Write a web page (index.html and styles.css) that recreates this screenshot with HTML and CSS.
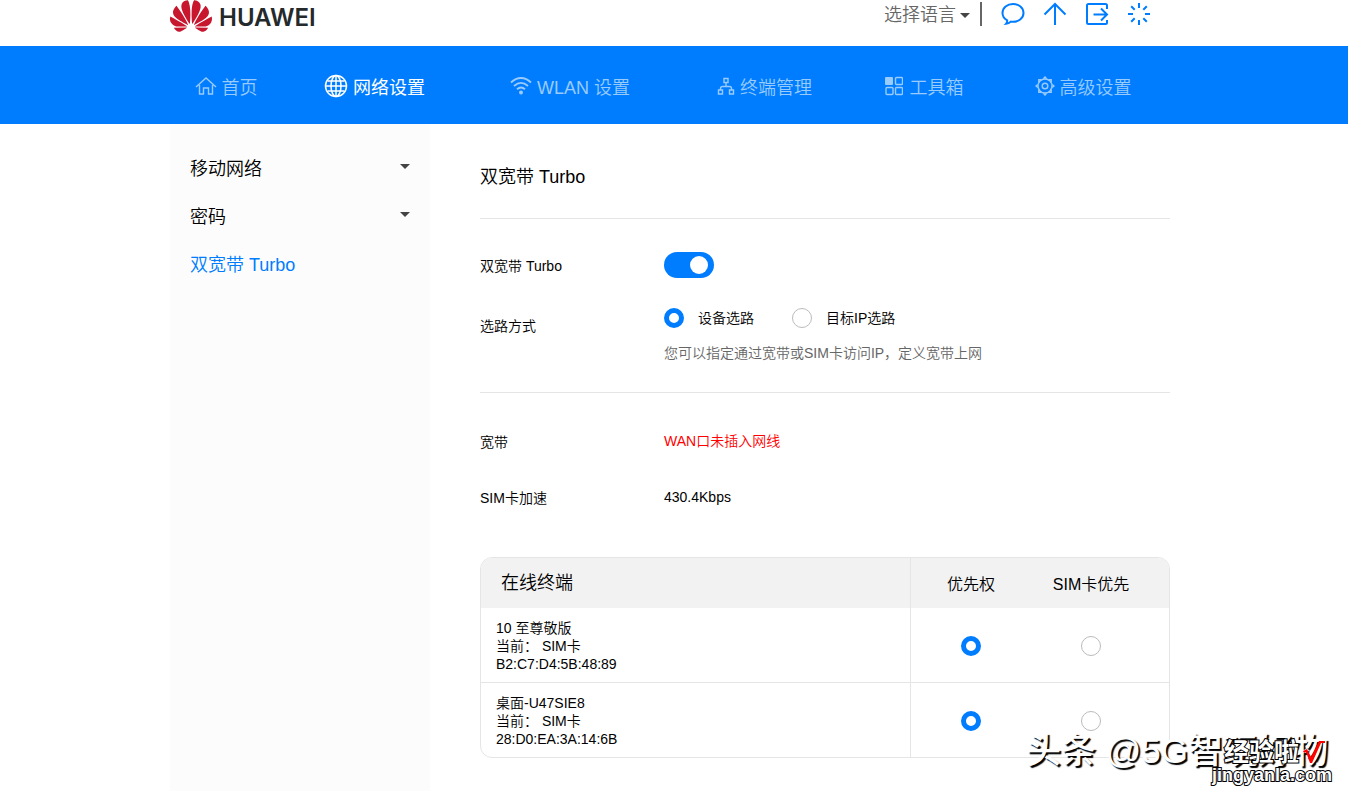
FILE: index.html
```html
<!DOCTYPE html>
<html lang="zh-CN">
<head>
<meta charset="utf-8">
<meta name="viewport" content="width=device-width, initial-scale=1">
<title>双宽带 Turbo</title>
<link rel="stylesheet" href="styles.css">
</head>
<body>
<header class="topbar">
  <div class="wrap topbar-inner">
    <a class="brand" href="#">
      <svg class="brand-mark" viewBox="0 2.9 24 18.2" aria-hidden="true"><path d="M3.67 6.14S1.82 7.91 1.72 9.78v.35c.08 1.51 1.22 2.4 1.22 2.4 1.83 1.79 6.26 4.04 7.3 4.55 0 0 .06.03.1-.01l.02-.04v-.04C7.52 10.8 3.67 6.14 3.67 6.14zM9.65 18.6c-.02-.08-.1-.08-.1-.08l-7.38.26c.8 1.43 2.15 2.53 3.56 2.2.96-.25 3.16-1.78 3.88-2.3.06-.05.04-.09.04-.09zm.08-.78C6.49 15.63.21 12.28.21 12.28c-.15.46-.2.9-.21 1.3v.07c0 1.07.4 1.82.4 1.82.8 1.69 2.34 2.2 2.34 2.2.7.3 1.4.31 1.4.31.12.02 4.4 0 5.54 0 .05 0 .08-.05.08-.05v-.06c0-.03-.03-.05-.03-.05zM9.06 3.19a3.42 3.42 0 00-2.57 3.15v.41c.03.6.16 1.05.16 1.05.66 2.9 3.86 7.65 4.55 8.65.05.05.1.03.1.03a.1.1 0 00.06-.1c1.06-10.6-1.11-13.42-1.11-13.42-.32.02-1.19.23-1.19.23zm8.299 2.27s-.49-1.8-2.44-2.28c0 0-.57-.14-1.17-.22 0 0-2.18 2.81-1.12 13.43.01.07.06.08.06.08.07.03.1-.03.1-.03.72-1.03 3.9-5.76 4.55-8.64 0 0 .36-1.4.02-2.34zm-2.92 13.07s-.07 0-.09.05c0 0-.01.07.03.1.7.51 2.85 2 3.88 2.3 0 0 .16.05.43.06h.14c.69-.02 1.9-.37 3-2.26l-7.4-.25zm7.83-8.41c.14-2.06-1.94-3.97-1.94-3.98 0 0-3.85 4.66-6.67 10.8 0 0-.03.08.02.13l.04.01h.06c1.06-.53 5.46-2.77 7.28-4.54 0 0 1.15-.93 1.21-2.42zm1.52 2.14s-6.28 3.37-9.52 5.55c0 0-.05.04-.03.11 0 0 .03.06.07.06 1.16 0 5.56 0 5.67-.02 0 0 .57-.02 1.27-.29 0 0 1.56-.5 2.37-2.27 0 0 .73-1.45.17-3.14z"/></svg>
      <span class="brand-name">HUAWEI</span>
    </a>
    <div class="tools">
      <button class="lang" type="button">选择语言<span class="caret"></span></button>
      <span class="divider"></span>
      <button class="tool" type="button" aria-label="消息"><svg viewBox="0 0 24 24"><path d="M6.200 18.300C3.300 16.700 1.500 14 1.500 11 1.500 5.900 6.200 2 12 2s10.500 3.900 10.500 9-4.700 8.800-10.500 8.800c-.8 0-1.500 0-2.200-.2-1.300 1.300-2.900 2-4.800 2.200.9-1 1.300-2.200 1.200-3.500z"/></svg></button>
      <button class="tool" type="button" aria-label="更新"><svg viewBox="0 0 24 24"><path d="M12 23V2M1.500 12.500 12 2l10.500 10.500"/></svg></button>
      <button class="tool" type="button" aria-label="退出"><svg viewBox="0 0 24 24"><path d="M22 7V3.500A1.500 1.500 0 0 0 20.500 2h-17A1.500 1.500 0 0 0 2 3.500v17A1.500 1.500 0 0 0 3.500 22h17a1.500 1.500 0 0 0 1.500-1.500V18M8.500 12.500H22M16 6.500l6 6-6 6"/></svg></button>
      <button class="tool" type="button" aria-label="刷新"><svg viewBox="0 0 24 24"><path d="M12 1v5M12 18v5M1 12h5M18 12h5M4.200 4.200l3.500 3.500M16.300 16.300l3.500 3.500M4.200 19.800l3.500-3.500M16.300 7.700l3.500-3.500"/></svg></button>
    </div>
  </div>
</header>
<nav class="nav">
  <div class="wrap nav-inner">
    <a class="nav-item" href="#"><svg viewBox="0 0 22 22"><path d="M1 12 11 3l10 9M4.500 10V19h4v-6h5v6h4v-9"/></svg>首页</a>
    <a class="nav-item active" href="#"><svg viewBox="0 0 24 24"><circle cx="12" cy="12" r="10.500"/><ellipse cx="12" cy="12" rx="5" ry="10.500"/><path d="M12 1.500v21M1.500 12h21M3.500 7h17M3.500 17h17"/></svg>网络设置</a>
    <a class="nav-item" href="#"><svg class="bold" viewBox="0 0 22 22"><path d="M1 7.500c6-6 14-6 20 0M4 11c4.500-4 9.500-4 14 0M7 14.200c2.500-2.200 5.500-2.200 8 0"/><circle class="solid" cx="11" cy="17.500" r="2"/></svg>WLAN 设置</a>
    <a class="nav-item narrow" href="#"><svg viewBox="0 0 18 20"><path d="M7 2.500h4v4H7zM1.500 14h4v4h-4zM12.500 14h4v4h-4zM9 6.500v4M3.500 14v-1.500a2 2 0 0 1 2-2h7a2 2 0 0 1 2 2V14"/></svg>终端管理</a>
    <a class="nav-item spaced" href="#"><svg viewBox="0 0 18 20"><rect class="solid" x="0" y="1" width="8" height="8" rx="1"/><rect x="10.500" y="1.500" width="7" height="7" rx="1"/><rect x="1" y="11.500" width="7" height="7" rx="1"/><rect x="10.500" y="11.500" width="7" height="7" rx="1"/></svg>工具箱</a>
    <a class="nav-item gear" href="#"><svg viewBox="0 0 20 20"><circle cx="10" cy="10" r="2.800"/><circle cx="10" cy="10" r="7"/><path d="M8.500 2.800 10 1l1.500 1.800M8.500 17.200 10 19l1.500-1.800M2.800 8.500 1 10l1.800 1.500M17.200 8.500 19 10l-1.800 1.500M3.800 6.200V3.800h2.400M13.800 3.800h2.400v2.400M16.200 13.800v2.400h-2.400M6.200 16.200H3.800v-2.400"/></svg>高级设置</a>
  </div>
</nav>
<div class="wrap layout">
  <aside class="sidebar">
    <a class="side-item" href="#">移动网络<span class="caret"></span></a>
    <a class="side-item" href="#">密码<span class="caret"></span></a>
    <a class="side-item current" href="#">双宽带 Turbo</a>
  </aside>
  <main class="content">
    <h1 class="title">双宽带 Turbo</h1>
    <form class="settings">
      <div class="row">
        <label class="row-label" for="turbo">双宽带 Turbo</label>
        <input class="switch" type="checkbox" id="turbo" checked>
      </div>
      <div class="row route-row">
        <span class="row-label" id="route-label">选路方式</span>
        <div class="route" role="radiogroup" aria-labelledby="route-label">
          <div class="options">
            <label class="option"><input class="radio" type="radio" name="route" checked>设备选路</label>
            <label class="option"><input class="radio" type="radio" name="route">目标IP选路</label>
          </div>
          <p class="hint">您可以指定通过宽带或SIM卡访问IP，定义宽带上网</p>
        </div>
      </div>
    </form>
    <section class="status">
      <div class="row"><span class="row-label">宽带</span><span class="alert">WAN口未插入网线</span></div>
      <div class="row"><span class="row-label">SIM卡加速</span><span>430.4Kbps</span></div>
    </section>
    <table class="devices">
      <thead>
        <tr><th class="col-name" scope="col">在线终端</th><th class="col-pri" scope="col">优先权</th><th class="col-sim" scope="col">SIM卡优先</th></tr>
      </thead>
      <tbody>
        <tr>
          <td class="col-name">10 至尊敬版<br>当前： SIM卡<br>B2:C7:D4:5B:48:89</td>
          <td class="col-pri"><input class="radio" type="radio" name="dev1" aria-label="优先权" checked></td>
          <td class="col-sim"><input class="radio" type="radio" name="dev1" aria-label="SIM卡优先"></td>
        </tr>
        <tr>
          <td class="col-name">桌面-U47SIE8<br>当前： SIM卡<br>28:D0:EA:3A:14:6B</td>
          <td class="col-pri"><input class="radio" type="radio" name="dev2" aria-label="优先权" checked></td>
          <td class="col-sim"><input class="radio" type="radio" name="dev2" aria-label="SIM卡优先"></td>
        </tr>
      </tbody>
    </table>
  </main>
</div>
<div class="credit">头条 @5G智玩好物</div>
<div class="stamp">
  <div class="stamp-name">经验啦<svg class="stamp-tick" viewBox="0 0 24 24" aria-hidden="true"><path d="M1 11l4-2 4 8L17 1h6v2h-4L10 23H8L4 12l-2 1z"/></svg></div>
  <div class="stamp-site">jingyanla.com</div>
</div>
</body>
</html>
```
FILE: styles.css
```css
* { box-sizing: border-box; }

body {
  display: flex;
  flex-direction: column;
  min-height: 100vh;
  margin: 0;
  position: relative;
  overflow-x: hidden;
  background: #fff;
  color: #000;
  font: 350 14px/18px "Liberation Sans", "Noto Sans CJK SC", sans-serif;
}

a { color: inherit; text-decoration: none; }
button { padding: 0; border: 0; background: none; font: inherit; color: inherit; }

.wrap { width: 100%; max-width: 1008px; margin: 0 auto; padding-right: 8px; }

.caret {
  width: 0;
  border: 5px solid transparent;
  border-top-color: #444;
  border-bottom: 0;
}

/* Top bar */
.topbar-inner { display: flex; justify-content: space-between; height: 46px; }
.brand { display: flex; align-items: flex-start; gap: 7px; }
.brand-mark { width: 42px; height: 32px; fill: #c7162e; }
.brand-name { padding-top: 4px; font: 600 24px/28px Inter, sans-serif; color: #24292b; }
.tools { display: flex; align-items: center; height: 28px; padding-right: 19px; gap: 18px; }
.lang { display: flex; align-items: center; gap: 4px; padding-top: 2px; font-size: 18px; color: #666; }
.divider { width: 2px; height: 24px; margin: 0 1px 0 -8px; background: #666; }
.tool { display: block; width: 24px; height: 24px; }
.tool svg { display: block; width: 24px; height: 24px; fill: none; stroke: #007dff; stroke-width: 2; }

/* Main navigation */
.nav { background: #007dff; color: #99cbff; }
.nav-inner { display: grid; grid-template-columns: 112fr 185fr 206fr 183fr 136fr 178fr; height: 78px; }
.nav-item { display: flex; align-items: center; justify-content: center; gap: 5px; padding-top: 6px; font-size: 18px; white-space: nowrap; }
.nav-item svg { width: 22px; height: 22px; margin-bottom: 4px; fill: none; stroke: currentColor; stroke-width: 1.400; }
.nav-item svg.bold { stroke-width: 1.800; }
.nav-item.active { color: #fff; font-weight: 400; }
.nav-item.active svg { width: 24px; height: 24px; stroke-width: 1.500; }
.nav-item.narrow svg, .nav-item.spaced svg { width: 18px; height: 20px; }
.nav-item.gear { padding-left: 4px; }
.nav-item.gear svg { width: 20px; height: 20px; }
.nav-item.spaced { gap: 7px; }
.nav-item .solid { fill: currentColor; stroke: none; }

/* Page body */
.layout { display: flex; flex: 1; }
.sidebar { flex: none; width: 260px; padding: 20px; background: #fcfcfc; }
.side-item { display: flex; align-items: center; justify-content: space-between; height: 48px; padding-top: 2px; font-size: 18px; }
.side-item .caret { margin-bottom: 6px; }
.side-item.current { color: #007dff; }
.content { flex: 1; padding: 0 0 33px 50px; }
.title { margin: 0; padding: 41px 0 28px; border-bottom: 1px solid #e5e5e5; font-size: 18px; font-weight: 350; line-height: 25px; }

.row { display: flex; align-items: center; }
.row-label { flex: none; width: 184px; padding-top: 2px; }
.settings { display: flex; flex-direction: column; gap: 30px; padding: 33px 0 30px; border-bottom: 1px solid #e5e5e5; }
.route-row { align-items: flex-start; }
.route-row .row-label { padding-top: 9px; }
.options { display: flex; gap: 38px; }
.option { display: flex; align-items: center; gap: 14px; }
.hint { margin: 0; padding-top: 16px; color: #666; }

.switch { position: relative; width: 50px; height: 26px; margin: 0; border-radius: 13px; background: #007dff; appearance: none; }
.switch::after { content: ""; position: absolute; top: 4px; right: 6px; width: 18px; height: 18px; border-radius: 50%; background: #fff; }
.radio { display: block; width: 20px; height: 20px; margin: 0; border: 1px solid #bbb; border-radius: 50%; background: #fff; appearance: none; }
.radio:checked { border: 5px solid #007dff; }

.status { display: flex; flex-direction: column; gap: 36px; padding: 38px 0 50px; }
.alert { color: #f00; }

/* Device table */
.devices { width: 100%; border: 1px solid #e5e5e5; border-radius: 12px; border-spacing: 0; overflow: hidden; table-layout: fixed; }
.devices th { height: 50px; padding: 4px 0 0; background: #f2f2f2; font-size: 16px; font-weight: 350; }
.devices td { height: 75px; padding: 2px 0 0; border-bottom: 1px solid #e5e5e5; }
.devices tr:last-child td { height: 74px; border-bottom: 0; }
.devices .col-name { padding-left: 15px; border-right: 1px solid #e5e5e5; text-align: left; }
.devices th.col-name { padding: 0 0 0 20px; font-size: 18px; }
.devices .col-pri { width: 120px; }
.devices .col-sim { width: 138px; padding-right: 18px; }
.devices .radio { margin: 0 auto; }

/* Overlaid credits */
.credit {
  position: absolute;
  right: 20px;
  bottom: 20px;
  color: #fff;
  font-size: 35px;
  font-weight: 500;
  line-height: 40px;
  white-space: nowrap;
  text-shadow: 2px 2px 1px #000;
}
.stamp { position: absolute; right: 16px; bottom: 6px; color: #fff; font-weight: 700; -webkit-text-stroke: 2px #000; paint-order: stroke fill; }
.stamp-name { display: flex; align-items: center; justify-content: flex-end; gap: 3px; padding-right: 6px; font-size: 25px; line-height: 26px; }
.stamp-tick { width: 24px; height: 24px; fill: #f00; }
.stamp-site { font-size: 18px; line-height: 20px; }
```
